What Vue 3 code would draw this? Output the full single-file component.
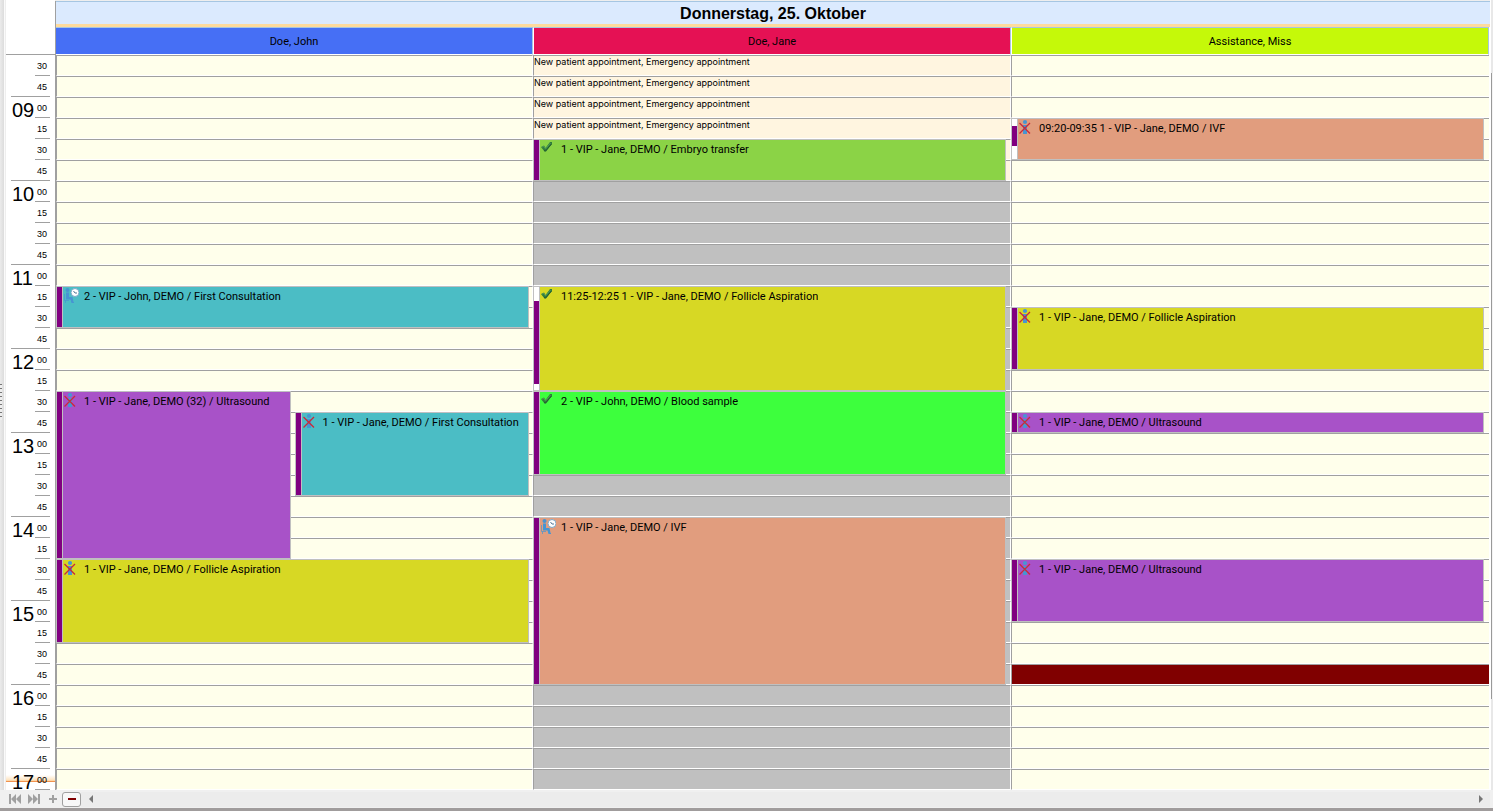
<script setup>

import { ref, computed } from 'vue';

const SLOT_HEIGHT = 21;
const SLOT_MINUTES = 15;
const DAY_START = 8 * 60 + 30;
const SLOT_COUNT = 35;

const title = ref('Donnerstag, 25. Oktober');

const columns = ref([
    {
        name: 'Doe, John',
        color: 'blue',
        appointments: [
            { start: '11:15', slots: 2, kind: 'consultation', icon: 'waiting', text: '2 - VIP - John, DEMO / First Consultation' },
            { start: '12:30', slots: 8, kind: 'ultrasound', icon: 'missed', lane: 1, text: '1 - VIP - Jane, DEMO (32) / Ultrasound' },
            { start: '12:45', slots: 4, kind: 'consultation', icon: 'missed', lane: 2, text: '1 - VIP - Jane, DEMO / First Consultation' },
            { start: '14:30', slots: 4, kind: 'aspiration', icon: 'missed', text: '1 - VIP - Jane, DEMO / Follicle Aspiration' }
        ]
    },
    {
        name: 'Doe, Jane',
        color: 'red',
        closedFrom: '10:00',
        reservedUntil: '10:00',
        labelUntil: '09:30',
        appointments: [
            { start: '09:30', slots: 2, kind: 'transfer', icon: 'done', text: '1 - VIP - Jane, DEMO / Embryo transfer' },
            { start: '11:15', slots: 5, kind: 'aspiration', icon: 'done', from: '11:25', to: '12:25', text: '1 - VIP - Jane, DEMO / Follicle Aspiration' },
            { start: '12:30', slots: 4, kind: 'blood', icon: 'done', text: '2 - VIP - John, DEMO / Blood sample' },
            { start: '14:00', slots: 8, kind: 'ivf', icon: 'waiting', text: '1 - VIP - Jane, DEMO / IVF' }
        ]
    },
    {
        name: 'Assistance, Miss',
        color: 'lime',
        blocked: ['15:45'],
        appointments: [
            { start: '09:15', slots: 2, kind: 'ivf', icon: 'missed', from: '09:20', to: '09:35', text: '1 - VIP - Jane, DEMO / IVF' },
            { start: '11:30', slots: 3, kind: 'aspiration', icon: 'missed', text: '1 - VIP - Jane, DEMO / Follicle Aspiration' },
            { start: '12:45', slots: 1, kind: 'ultrasound', icon: 'missed', text: '1 - VIP - Jane, DEMO / Ultrasound' },
            { start: '14:30', slots: 3, kind: 'ultrasound', icon: 'missed', text: '1 - VIP - Jane, DEMO / Ultrasound' }
        ]
    }
]);

const slots = computed(() => {
    const list = [];
    for (let i = 0; i < SLOT_COUNT; i++) {
        const total = DAY_START + i * SLOT_MINUTES;
        list.push({
            total,
            hour: String(Math.floor(total / 60)).padStart(2, '0'),
            minute: String(total % 60).padStart(2, '0')
        });
    }
    return list;
});

function toMinutes(time) {
    const [h, m] = time.split(':');
    return Number(h) * 60 + Number(m);
}

function slotClass(column, slot) {
    if (column.blocked && column.blocked.some(time => toMinutes(time) === slot.total)) {
        return 'blocked';
    }
    if (column.reservedUntil && slot.total < toMinutes(column.reservedUntil)) {
        return 'reserved';
    }
    if (column.closedFrom && slot.total >= toMinutes(column.closedFrom)) {
        return 'closed';
    }
    return '';
}

function hasLabel(column, slot) {
    return column.labelUntil && slot.total < toMinutes(column.labelUntil);
}

function placement(item) {
    const row = (toMinutes(item.start) - DAY_START) / SLOT_MINUTES + 1;
    return {
        gridRow: `${row} / span ${item.slots}`,
        gridColumn: item.lane ? String(item.lane) : '1 / -1'
    };
}

// Purple bar shows the real duration inside the occupied slots
function barStyle(item) {
    if (!item.from) {
        return { height: '100%' };
    }
    const perMinute = SLOT_HEIGHT / SLOT_MINUTES;
    return {
        marginTop: Math.round((toMinutes(item.from) - toMinutes(item.start)) * perMinute) + 'px',
        height: Math.round((toMinutes(item.to) - toMinutes(item.from)) * perMinute) - 1 + 'px'
    };
}

</script>

<template>
    <div class="page">
        <div class="main">
            <div class="splitter"><span class="grip"></span></div>
            <div class="ruler">
                <div class="ruler-head"></div>
                <div v-for="slot in slots" :key="slot.total" class="ruler-row"
                    :class="{ now: slot.total === 1020 }">
                    <span class="hour">{{ slot.minute === '00' ? slot.hour : '' }}</span>
                    <span class="minute">{{ slot.minute }}</span>
                    <span class="tick" :class="{ wide: slot.minute === '45' }"></span>
                </div>
            </div>
            <div class="calendar">
                <h1 class="title">{{ title }}</h1>
                <div class="columns">
                    <div v-for="column in columns" :key="column.name" class="column">
                        <h2 class="column-head" :class="column.color">{{ column.name }}</h2>
                        <div class="slots">
                            <div v-for="(slot, index) in slots" :key="slot.total" class="slot"
                                :class="slotClass(column, slot)" :style="{ gridRow: index + 1 }">
                                {{ hasLabel(column, slot) ? 'New patient appointment, Emergency appointment' : '' }}
                            </div>
                            <div v-for="item in column.appointments" :key="item.start" class="appointment"
                                :class="item.kind" :style="placement(item)">
                                <div class="duration">
                                    <div class="bar" :style="barStyle(item)"></div>
                                </div>
                                <div class="body">
                                    <svg v-if="item.icon === 'done'" class="icon" viewBox="0 0 16 16">
                                        <path d="M1 7 L4 5.500 L5.500 8 L10 2 L12 2 L12 4 L6 11.500 L4.500 11.500 Z" fill="#2f7d3b" />
                                        <path d="M2 7 L4 6.500 L5.500 9 L10.500 3" fill="none" stroke="#4f9a55" />
                                        <path d="M4 10.500 L5.500 11 L11.500 4" fill="none" stroke="#245c30" />
                                    </svg>
                                    <svg v-else-if="item.icon === 'missed'" class="icon" viewBox="0 0 16 16">
                                        <circle cx="7" cy="3" r="2.100" fill="#4795d2" />
                                        <path d="M5 6 H9 V10 L9 15 H5 L5 10 Z" fill="#4795d2" />
                                        <path d="M1.500 4 L12 14.500 M12 4 L1.500 14.500" stroke="#c92a3a" stroke-width="1.300" />
                                    </svg>
                                    <svg v-else class="icon" viewBox="0 0 16 16">
                                        <circle cx="4.500" cy="3" r="2" fill="#4795d2" />
                                        <path d="M3 5.500 H6 V10 H9.500 L10.500 15 H11 V16 H8.500 L7.500 12.500 H3 Z" fill="#4795d2" />
                                        <path d="M1.500 7 V13.500 H6 M2.500 13.500 V16" fill="none" stroke="#4795d2" stroke-opacity="0.7" />
                                        <circle cx="12" cy="5.500" r="4" fill="#fff" stroke="#7ba9c9" />
                                        <path d="M10.500 4 L12 6 H14" fill="none" stroke="#527897" />
                                    </svg>
                                    <span class="text">{{ item.from ? `${item.from}-${item.to} ` : '' }}{{ item.text }}</span>
                                </div>
                            </div>
                        </div>
                    </div>
                </div>
            </div>
            <div class="scroll-v"><div class="thumb"></div></div>
        </div>
        <div class="footer">
            <button type="button" aria-label="First">
                <svg width="12" height="10" viewBox="0 0 12 10"><path d="M0 0h2v10h-2z M7 0v10l-5-5z M12 0v10l-5-5z" /></svg>
            </button>
            <button type="button" aria-label="Last">
                <svg width="12" height="10" viewBox="0 0 12 10"><path d="M10 0h2v10h-2z M0 0v10l5-5z M5 0v10l5-5z" /></svg>
            </button>
            <button type="button" aria-label="Add">
                <svg width="8" height="8" viewBox="0 0 8 8"><path d="M3 0h2v3h3v2h-3v3h-2v-3h-3v-2h3z" /></svg>
            </button>
            <button type="button" aria-label="Remove" class="remove">
                <svg width="8" height="2" viewBox="0 0 8 2"><path d="M0 0h8v2h-8z" /></svg>
            </button>
            <div class="scroll-h">
                <button type="button" aria-label="Scroll left">
                    <svg width="4" height="8" viewBox="0 0 4 8"><path d="M4 0v8l-4-4z" /></svg>
                </button>
                <button type="button" aria-label="Scroll right">
                    <svg width="4" height="8" viewBox="0 0 4 8"><path d="M0 0v8l4-4z" /></svg>
                </button>
            </div>
        </div>
    </div>
</template>

<style>
body {
    margin: 0;
    background: #f0f0f0;
}
</style>

<style scoped>
.page {
    font-family: "Liberation Sans", Arial, sans-serif;
    color: #000;
    border-bottom: 3px solid #a09c9c;
}

.main {
    display: flex;
    background: #fff;
}

.splitter {
    flex: none;
    width: 4px;
    display: flex;
    align-items: center;
    background: linear-gradient(to right, #ebebeb, #dcdcdc);
    border-right: 1px solid #fafafa;
}

.grip {
    width: 2px;
    height: 36px;
    margin-top: 14px;
    background: repeating-linear-gradient(#777 0 1px, #eee 1px 4px);
}

.ruler {
    flex: none;
    width: 49px;
    border-left: 1px solid #eee;
    border-right: 1px solid #a0a0a0;
    margin-right: -1px;
}

.ruler-head {
    height: 54px;
    border-bottom: 1px solid #a0a0a0;
}

.ruler-row {
    display: grid;
    grid-template-columns: 24px 15px;
    grid-template-rows: 20px 1px;
    justify-content: end;
    padding-right: 5px;
}

.ruler-row.now {
    background: linear-gradient(#fff 0 6px, #fde3c0 11px, #fdc88e 12px, #f0924e 12px 13px, #fff 13px);
}

.hour {
    font-size: 20px;
    line-height: 26px;
    height: 20px;
    padding-left: 1px;
}

.minute {
    font-size: 9px;
    line-height: 22px;
    height: 20px;
    padding-left: 2px;
}

.tick {
    grid-column: 2;
    background: #a0a0a0;
}

.tick.wide {
    grid-column: 1 / -1;
}

.calendar {
    flex: 1;
    min-width: 0;
    border-top: 1px solid #eee;
}

.title {
    margin: 0;
    height: 22px;
    font-size: 16px;
    line-height: 24px;
    text-align: center;
    background: #dbeafe;
    border-top: 1px solid #a6c6e2;
    border-bottom: 3px solid #fedb9d;
    margin-left: 1px;
}

.columns {
    display: grid;
    grid-template-columns: repeat(3, 1fr);
    margin-right: 1px;
}

.column {
    min-width: 0;
}

.column:first-child {
    border-left: 1px solid #a0a0a0;
}

.column-head {
    margin: 0;
    height: 26px;
    font-family: Roboto, "Liberation Sans", sans-serif;
    font-size: 11px;
    font-weight: normal;
    line-height: 27px;
    text-align: center;
    border-top: 1px solid #a6c6e2;
    border-left: 1px solid #fff;
    border-right: 1px solid #a6c6e2;
    border-bottom: 1px solid #fff;
}

.column:first-child .column-head {
    border-left: 0;
}

.column-head.blue {
    background: #466ff5;
}

.column-head.red {
    background: #e51154;
}

.column-head.lime {
    background: #c5f909;
}

.slots {
    display: grid;
    grid-template-columns: 1fr 1fr;
    grid-auto-rows: 21px;
}

.slot {
    grid-column: 1 / -1;
    box-sizing: border-box;
    font-family: Inter, "Liberation Sans", sans-serif;
    font-size: 9px;
    line-height: 11px;
    background: #ffffeb;
    border-top: 1px solid #a0a0a0;
    border-left: 1px solid #a0a0a0;
    border-right: 1px solid #fff;
    border-bottom: 1px solid #fff;
}

.column:last-child .slot {
    border-right: 0;
}

.slot.reserved {
    background: #fff5e0;
}

.slot.closed {
    background: #c0c0c0;
}

.slot.blocked {
    background: #800000;
}

.appointment {
    display: flex;
    min-width: 0;
    margin-right: 4px;
    border: 1px solid #c0c0c0;
}

.column + .column .appointment {
    margin-right: 5px;
}

.duration {
    flex: none;
    width: 5px;
    background: #fff;
    border-right: 1px solid #c0c0c0;
}

.bar {
    background: #800080;
}

.body {
    display: flex;
    align-items: flex-start;
    min-width: 0;
    overflow: hidden;
}

.icon {
    flex: none;
    width: 16px;
    height: 16px;
}

.text {
    padding-left: 5px;
    font-family: Roboto, "Liberation Sans", sans-serif;
    font-size: 11px;
    line-height: 19px;
    white-space: nowrap;
}

.consultation {
    background: #4bbdc5;
}

.ultrasound {
    background: #a852c8;
}

.aspiration {
    background: #d7d824;
}

.transfer {
    background: #8bd346;
}

.blood {
    background: #3dff3d;
}

.ivf {
    background: #e19d7e;
}

.scroll-v {
    flex: none;
    display: flex;
    flex-direction: column;
    width: 2px;
    padding: 73px 0 91px;
    border-left: 1px solid #fff;
    background: #e8e8e8;
}

.thumb {
    flex: 1;
    border-left: 1px solid #999;
    background: #f4f4f4;
}

.footer {
    display: flex;
    align-items: center;
    height: 18px;
    padding-left: 5px;
    background: #f0f0f0;
}

.footer button {
    display: flex;
    align-items: center;
    justify-content: center;
    width: 19px;
    height: 15px;
    padding: 0;
    border: 0;
    background: none;
}

.footer svg {
    fill: #a0a0a0;
}

.footer .remove {
    border: 1px solid #a0a0a0;
    border-radius: 3px;
    background: #f8f8f8;
}

.footer .remove svg {
    fill: #800000;
}

.footer .scroll-h {
    flex: 1;
    display: flex;
    justify-content: space-between;
    align-items: center;
    height: 15px;
    margin-right: 3px;
    background: #ececec;
}

.footer .scroll-h svg {
    fill: #777;
}
</style>
